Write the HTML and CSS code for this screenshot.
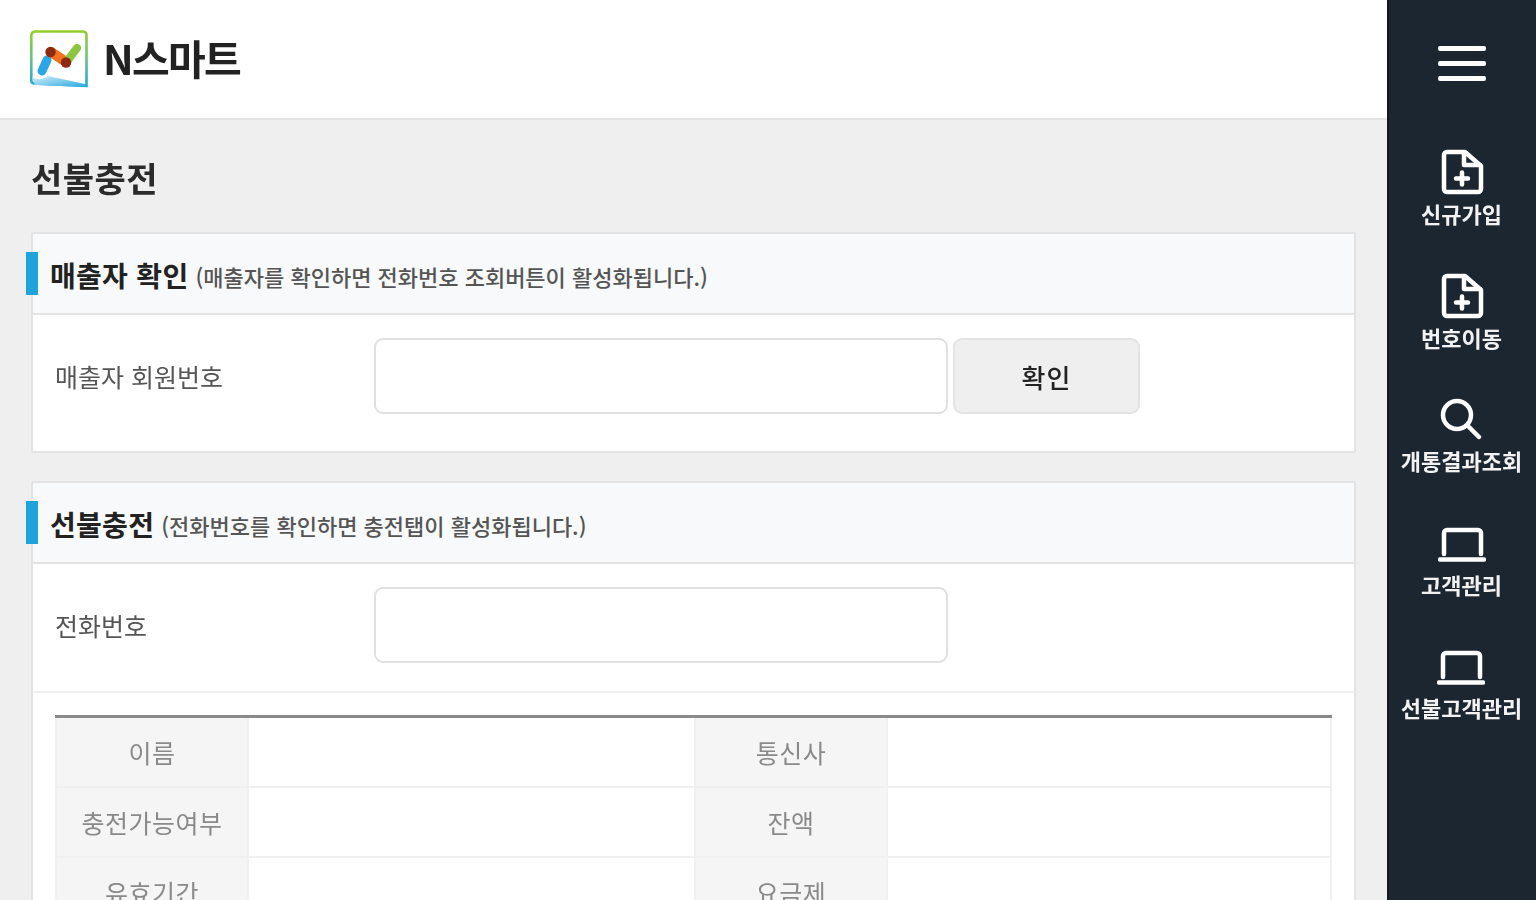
FILE: index.html
```html
<!DOCTYPE html>
<html lang="ko">
<head>
<meta charset="utf-8">
<title>N스마트 선불충전</title>
<link rel="stylesheet" href="styles.css">
</head>
<body>
<div class="app">
  <div class="main">
    <header class="topbar">
      <svg class="logo" viewBox="0 0 58 58" aria-hidden="true">
        <defs>
          <linearGradient id="frame" x1="0" y1="0" x2="0" y2="1">
            <stop offset="0" stop-color="#93cf2c"/>
            <stop offset=".55" stop-color="#5fc28c"/>
            <stop offset="1" stop-color="#1ea6e0"/>
          </linearGradient>
          <linearGradient id="wedge" x1="0" y1="0" x2="1" y2="1">
            <stop offset="0" stop-color="#d8eff9"/>
            <stop offset="1" stop-color="#2aa8e0"/>
          </linearGradient>
        </defs>
        <path d="M5 1.500H53A3.500 3.500 0 0 1 56.500 5V56L4 53.500A3 3 0 0 1 1.300 50.500V5A4 4 0 0 1 5 1.500Z" fill="#fff" stroke="url(#frame)" stroke-width="2.600"/>
        <path d="M2 47Q10 52 18 46L55 54V57L5 55Z" fill="url(#wedge)"/>
        <line x1="12" y1="41" x2="17" y2="30" stroke="#2ba6e8" stroke-width="9" stroke-linecap="round"/>
        <line x1="21" y1="22" x2="36" y2="32" stroke="#f4711e" stroke-width="10" stroke-linecap="round"/>
        <line x1="47" y1="18" x2="38" y2="30" stroke="#8cc63f" stroke-width="8" stroke-linecap="round"/>
        <circle cx="20.500" cy="22" r="5.200" fill="#8e2a14"/>
        <circle cx="36" cy="32.500" r="5.200" fill="#8e2a14"/>
      </svg>
      <span class="brand">N스마트</span>
    </header>
    <main class="content">
      <h1 class="page-title">선불충전</h1>

      <section class="panel first">
        <div class="panel-head">
          <span class="accent"></span>
          <h2 class="panel-title">매출자 확인</h2>
          <span class="panel-note">(매출자를 확인하면 전화번호 조회버튼이 활성화됩니다.)</span>
        </div>
        <div class="form-row">
          <label class="form-label">매출자 회원번호</label>
          <input class="text-input" type="text">
          <button class="btn" type="button">확인</button>
        </div>
      </section>

      <section class="panel">
        <div class="panel-head">
          <span class="accent"></span>
          <h2 class="panel-title">선불충전</h2>
          <span class="panel-note">(전화번호를 확인하면 충전탭이 활성화됩니다.)</span>
        </div>
        <div class="form-row short">
          <label class="form-label">전화번호</label>
          <input class="text-input" type="text">
        </div>
        <div class="table-wrap">
          <table class="info">
            <colgroup>
              <col class="c-th"><col class="c-td"><col class="c-th"><col>
            </colgroup>
            <tbody>
              <tr><th>이름</th><td></td><th>통신사</th><td></td></tr>
              <tr><th>충전가능여부</th><td></td><th>잔액</th><td></td></tr>
              <tr><th>유효기간</th><td></td><th>요금제</th><td></td></tr>
            </tbody>
          </table>
        </div>
      </section>
    </main>
  </div>

  <nav class="side">
    <div class="burger"><span></span><span></span><span></span></div>
    <a class="side-item">
      <svg class="ico" viewBox="0 0 48 48" aria-hidden="true"><path class="st" d="M9 4H27L43 18V41A3 3 0 0 1 40 44H9A3 3 0 0 1 6 41V7A3 3 0 0 1 9 4Z"/><path class="st" d="M26 5V17H42"/><path class="st" d="M24 24.500V36.500M18 30.500H30"/></svg>
      <span class="side-label">신규가입</span>
    </a>
    <a class="side-item">
      <svg class="ico" viewBox="0 0 48 48" aria-hidden="true"><path class="st" d="M9 4H27L43 18V41A3 3 0 0 1 40 44H9A3 3 0 0 1 6 41V7A3 3 0 0 1 9 4Z"/><path class="st" d="M26 5V17H42"/><path class="st" d="M24 24.500V36.500M18 30.500H30"/></svg>
      <span class="side-label">번호이동</span>
    </a>
    <a class="side-item">
      <svg class="ico" viewBox="0 0 48 48" aria-hidden="true"><circle class="st" cx="20" cy="20" r="14"/><path class="st" d="M30.500 30.500L42 42"/></svg>
      <span class="side-label">개통결과조회</span>
    </a>
    <a class="side-item">
      <svg class="ico" viewBox="0 0 48 48" aria-hidden="true"><path class="st" d="M6 35V14A3 3 0 0 1 9 11H40A3 3 0 0 1 43 14V35"/><path class="st" d="M2 40.500H46"/></svg>
      <span class="side-label">고객관리</span>
    </a>
    <a class="side-item">
      <svg class="ico" viewBox="0 0 48 48" aria-hidden="true"><path class="st" d="M6 35V14A3 3 0 0 1 9 11H40A3 3 0 0 1 43 14V35"/><path class="st" d="M2 40.500H46"/></svg>
      <span class="side-label">선불고객관리</span>
    </a>
  </nav>
</div>
</body>
</html>
```
FILE: styles.css
```css
* { box-sizing: border-box; }
html, body { margin: 0; height: 100%; overflow: hidden; }
body {
  font-family: "Noto Sans CJK KR", "Liberation Sans", sans-serif;
  background: #efefef;
  color: #222;
}
.app { display: flex; height: 900px; overflow: hidden; filter: blur(.7px); }
.main { width: 1387px; flex: none; }
.topbar {
  height: 120px;
  background: #fff;
  border-bottom: 2px solid #e3e3e3;
  display: flex;
  align-items: center;
  padding: 0 0 3px 30px;
  gap: 15px;
}
.logo { width: 58px; height: 58px; flex: none; margin-top: 3px; }
.brand { font-size: 41px; font-weight: 700; color: #222; letter-spacing: -1.700px; line-height: 1; }
.content { padding: 0 31px; }
.page-title { margin: 0; height: 112px; display: flex; align-items: center; font-size: 34px; font-weight: 700; color: #2b2b2b; letter-spacing: .5px; padding-top: 3px; }
.panel { background: #fff; border: 2px solid #e3e3e3; border-radius: 2px; margin-bottom: 28px; }
.panel-head {
  position: relative;
  height: 81px;
  background: #f8f9fa;
  border-bottom: 2px solid #e3e3e3;
  display: flex;
  align-items: center;
  padding: 0 0 0 17px;
  gap: 7px;
}
.accent { position: absolute; left: -7px; top: 18px; width: 12px; height: 43px; background: #1ea3dc; }
.panel-title { margin: 0; font-size: 28px; font-weight: 700; color: #222; letter-spacing: .3px; line-height: 1; padding-top: 2px; }
.panel-note { font-size: 22px; font-weight: 500; color: #555; letter-spacing: 0; line-height: 1; padding-top: 5px; }
.form-row { display: flex; align-items: center; height: 136px; padding: 0 0 14px 22px; }
.form-row.short { height: 129px; padding: 0 0 6px 22px; border-bottom: 2px solid #f0f0f0; }
.form-label { width: 319px; flex: none; font-size: 25px; color: #555; letter-spacing: 0; }
.text-input { width: 574px; height: 76px; background: #fff; border: 2px solid #e0e0e0; border-radius: 9px; flex: none; }
.btn {
  width: 187px; height: 76px; margin-left: 5px;
  background: #efefef; border: 2px solid #e3e3e3; border-radius: 9px;
  font: 500 26px "Noto Sans CJK KR", sans-serif; color: #222; letter-spacing: 1px;
}
.table-wrap { padding: 22px 22px 0; }
.info { width: 100%; border-collapse: collapse; table-layout: fixed; border-top: 3px solid #8a8a8a; }
.c-th { width: 192px; }
.c-td { width: 447px; }
.info th, .info td { height: 70px; border: 2px solid #f0f0f0; border-top: 0; padding: 0; }
.info th { background: #f5f5f5; font-weight: 400; font-size: 25px; color: #8a8a8a; letter-spacing: .5px; }
.info td { background: #fff; }
.side { width: 149px; flex: none; background: #1c2631; box-shadow: inset 2px 0 0 #14181d; color: #fff; display: flex; flex-direction: column; align-items: center; }
.burger { margin-top: 46px; margin-bottom: 67px; width: 48px; display: flex; flex-direction: column; gap: 10px; }
.burger span { display: block; height: 5px; background: #fff; border-radius: 2px; }
.side-item { display: flex; flex-direction: column; align-items: center; height: 123.500px; }
.ico { width: 48px; height: 48px; display: block; flex: none; }
.st { fill: none; stroke: #fff; stroke-width: 4.500; stroke-linecap: round; stroke-linejoin: round; }
.side-label { margin-top: 2px; font-size: 22px; font-weight: 700; line-height: 30px; letter-spacing: 0; color: #f2f2f2; white-space: nowrap; }
```
